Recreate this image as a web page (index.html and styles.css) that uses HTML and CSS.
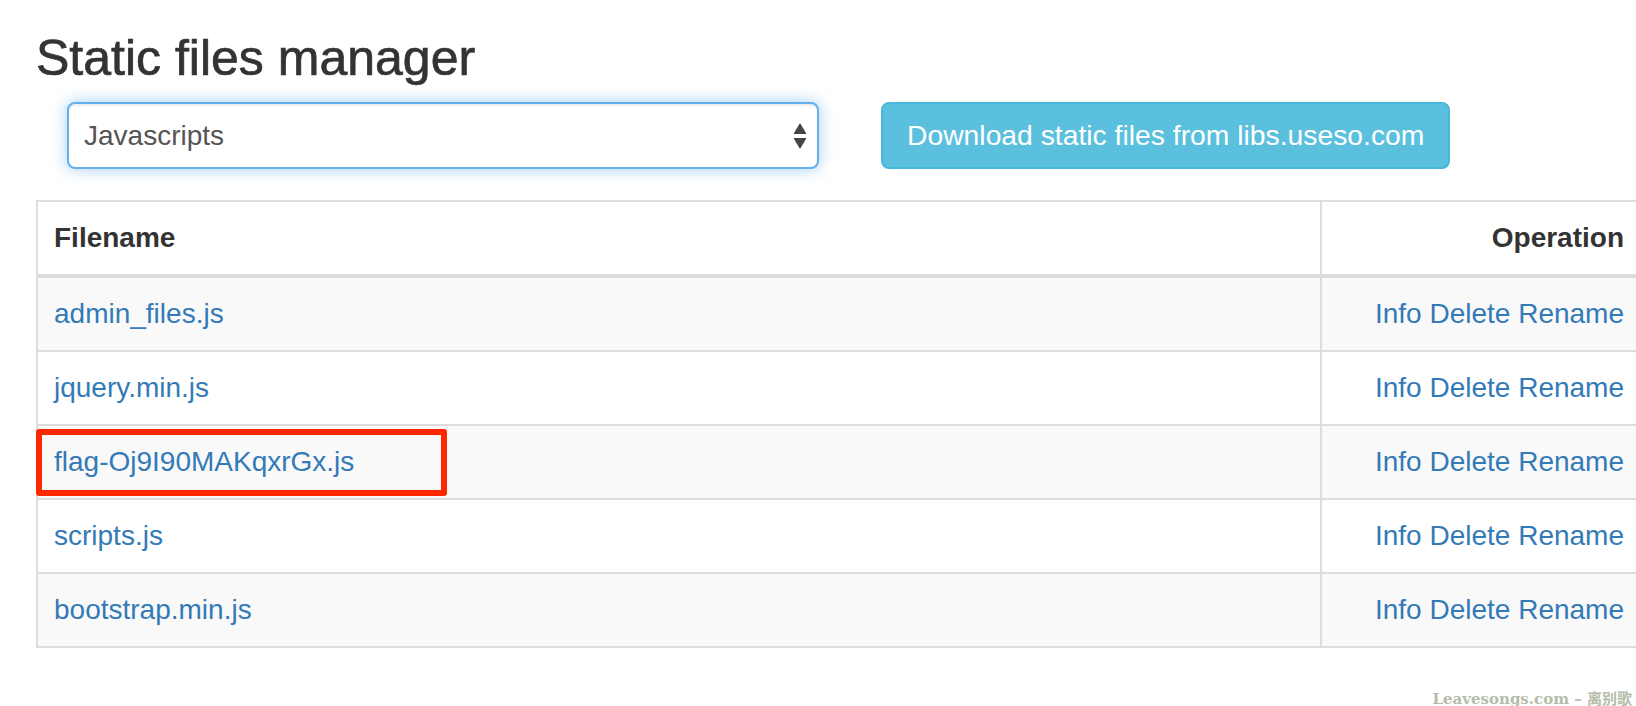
FILE: index.html
```html
<!DOCTYPE html>
<html lang="en">
<head>
  <meta charset="UTF-8" />
  <meta name="viewport" content="width=device-width, initial-scale=1.0" />
  <title>Static files manager</title>
  <link rel="stylesheet" href="styles.css">
</head>
<body>
  <h3 class="page-title">Static files manager</h3>

  <div class="controls">
    <div class="select-wrap">
      <select class="form-control" id="fileType">
        <option>Javascripts</option>
        <option>Stylesheets</option>
        <option>Images</option>
      </select>
      <svg class="select-arrows" width="14" height="26" viewBox="0 0 14 26">
        <polygon points="7,0 13.5,11 0.5,11" fill="#444"/>
        <polygon points="0.5,15 13.5,15 7,26" fill="#444"/>
      </svg>
    </div>
    <button class="btn-info" id="downloadButton">Download static files from libs.useso.com</button>
  </div>

  <div class="table-wrap">
    <table class="files-table">
      <colgroup>
        <col class="col-name">
        <col class="col-op">
      </colgroup>
      <thead>
        <tr>
          <th>Filename</th>
          <th class="op">Operation</th>
        </tr>
      </thead>
      <tbody>
        <tr>
          <td><a href="#">admin_files.js</a></td>
          <td class="op"><a href="#">Info</a> <a href="#">Delete</a> <a href="#">Rename</a></td>
        </tr>
        <tr>
          <td><a href="#">jquery.min.js</a></td>
          <td class="op"><a href="#">Info</a> <a href="#">Delete</a> <a href="#">Rename</a></td>
        </tr>
        <tr>
          <td><a href="#">flag-Oj9I90MAKqxrGx.js</a></td>
          <td class="op"><a href="#">Info</a> <a href="#">Delete</a> <a href="#">Rename</a></td>
        </tr>
        <tr>
          <td><a href="#">scripts.js</a></td>
          <td class="op"><a href="#">Info</a> <a href="#">Delete</a> <a href="#">Rename</a></td>
        </tr>
        <tr>
          <td><a href="#">bootstrap.min.js</a></td>
          <td class="op"><a href="#">Info</a> <a href="#">Delete</a> <a href="#">Rename</a></td>
        </tr>
      </tbody>
    </table>
    <div class="highlight-box"></div>
  </div>

  <div class="watermark">Leavesongs.com – 离别歌</div>
</body>
</html>
```

FILE: styles.css
```css
html, body {
  overflow: hidden;
}

body {
  margin: 0;
  padding: 32px 0 0 36px;
  font-family: 'Liberation Sans', Arial, sans-serif;
  font-size: 28px;
  line-height: 40px;
  color: #333;
  background: #fff;
}

.page-title {
  margin: 0;
  font-size: 50px;
  font-weight: 500;
  line-height: 52.8px;
  color: #333;
  -webkit-text-stroke: 0.7px #333;
}

.controls {
  display: flex;
  align-items: flex-start;
  gap: 62px;
  margin-top: 17px;
  padding-left: 31px;
}

.select-wrap {
  position: relative;
  width: 752px;
}

.form-control {
  display: block;
  width: 100%;
  height: 67px;
  padding: 0 40px 0 15px;
  font-family: 'Liberation Sans', Arial, sans-serif;
  font-size: 28px;
  color: #555;
  background: #fff;
  border: 2px solid #66afe9;
  border-radius: 8px;
  box-shadow: inset 0 2px 2px rgba(0,0,0,0.075), 0 0 16px rgba(102,175,233,0.6);
  outline: none;
  appearance: none;
  -webkit-appearance: none;
}

.select-arrows {
  position: absolute;
  top: 21px;
  right: 12px;
  pointer-events: none;
}

.btn-info {
  height: 67px;
  padding: 0 24px;
  font-family: 'Liberation Sans', Arial, sans-serif;
  font-size: 28.3px;
  color: #fff;
  background: #5bc0de;
  border: 2px solid #46b8da;
  border-radius: 8px;
  cursor: pointer;
  white-space: nowrap;
}

.table-wrap {
  position: relative;
  margin-top: 31px;
  width: 1604px;
}

.files-table {
  width: 1604px;
  table-layout: fixed;
  border-collapse: collapse;
  border-spacing: 0;
  border: 2px solid #ddd;
}

.col-name {
  width: 1284px;
}

.col-op {
  width: 320px;
}

.files-table th,
.files-table td {
  padding: 16px;
  line-height: 40px;
  text-align: left;
  border: 2px solid #ddd;
  white-space: nowrap;
}

.files-table thead th {
  font-weight: bold;
  border-bottom: 4px solid #ddd;
}

.files-table .op {
  text-align: right;
}

.files-table tbody tr:nth-child(odd) {
  background: #f9f9f9;
}

.files-table a {
  color: #337ab7;
  text-decoration: none;
}

.highlight-box {
  position: absolute;
  top: 229px;
  left: 0;
  width: 411px;
  height: 67px;
  box-sizing: border-box;
  border: 6px solid #fd2700;
  border-radius: 3px;
  pointer-events: none;
}

.watermark {
  position: absolute;
  right: 4px;
  bottom: -2px;
  font-family: 'DejaVu Serif', 'Noto Sans CJK SC', serif;
  font-size: 15px;
  font-weight: bold;
  line-height: 18px;
  color: #b3bda8;
  white-space: nowrap;
}
```
